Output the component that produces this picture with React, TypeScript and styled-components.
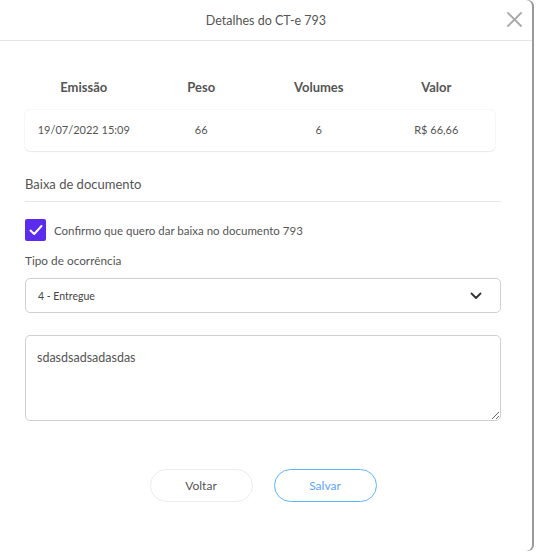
import React, { useState } from "react";
import styled, { createGlobalStyle } from "styled-components";

const GlobalStyle = createGlobalStyle`
  body {
    margin: 0;
    background: #ffffff;
    font-family: Lato, "Noto Sans", sans-serif;
    color: #555;
  }
`;

const Page = styled.div`
  width: 537px;
  height: 553px;
  overflow: hidden;
`;

const Modal = styled.div`
  width: 532px;
  height: 551px;
  background: #fff;
  border-radius: 0 6px 6px 0;
  box-shadow: 2px 0 0 #9a9a9a;
  display: flex;
  flex-direction: column;
`;

const Header = styled.header`
  height: 40px;
  border-bottom: 1px solid #e6e6e6;
  display: flex;
  align-items: center;
  justify-content: center;
  position: relative;

  h2 {
    margin: 0;
    font-size: 12.5px;
    font-weight: 400;
    color: #555;
  }
`;

const Close = styled.button`
  position: absolute;
  right: 9px;
  top: 11px;
  border: none;
  background: none;
  padding: 0;
  cursor: pointer;
  display: flex;
`;

const Body = styled.div`
  padding: 0 31px 0 25px;
  display: flex;
  flex-direction: column;
`;

const Grid = styled.div`
  width: 470px;
  display: grid;
  grid-template-columns: repeat(4, 1fr);
  text-align: center;
`;

const HeadRow = styled(Grid)`
  margin-top: 36px;
  height: 20px;
  align-items: center;
  font-size: 13px;
  font-weight: 700;
  color: #555;
`;

const DataRow = styled(Grid)`
  margin-top: 13px;
  height: 41px;
  align-items: center;
  font-size: 11px;
  color: #555;
  border-radius: 5px;
  box-shadow: 0 0 2px rgba(0, 0, 0, 0.12), 0 1px 1px rgba(0, 0, 0, 0.06);

  span {
    margin-bottom: 3px;
  }
`;

const SectionTitle = styled.div`
  margin-top: 24px;
  padding-bottom: 8px;
  border-bottom: 1px solid #e6e6e6;
  font-size: 13px;
  line-height: 18px;
  color: #555;
`;

const CheckRow = styled.label`
  margin-top: 17px;
  display: flex;
  align-items: center;
  gap: 8px;
  font-size: 11.5px;
  color: #555;
  cursor: pointer;
`;

const Box = styled.span<{ $on: boolean }>`
  width: 21px;
  height: 22px;
  border-radius: 2px;
  background: ${(p) => (p.$on ? "#5b2bee" : "#fff")};
  border: ${(p) => (p.$on ? "none" : "1px solid #aaa")};
  display: flex;
  align-items: center;
  justify-content: center;
`;

const Label = styled.div`
  margin-top: 12px;
  font-size: 11.8px;
  line-height: 16px;
  color: #555;
`;

const Select = styled.div`
  margin-top: 9px;
  height: 35px;
  box-sizing: border-box;
  border: 1px solid #cfcfcf;
  border-radius: 5px;
  padding: 0 18px 0 12px;
  display: flex;
  align-items: center;
  justify-content: space-between;
  font-size: 10.5px;
  color: #444;
`;

const TextArea = styled.textarea`
  margin-top: 22px;
  height: 86px;
  box-sizing: border-box;
  border: 1px solid #cfcfcf;
  border-radius: 5px;
  padding: 14px 11px;
  font-family: inherit;
  font-size: 12.5px;
  color: #555;
  resize: vertical;
  outline: none;
`;

const Actions = styled.div`
  margin-top: 48px;
  display: flex;
  justify-content: center;
  gap: 21px;
`;

const Button = styled.button<{ $primary?: boolean }>`
  width: 103px;
  height: 33px;
  border-radius: 17px;
  background: #fff;
  border: 1.5px solid ${(p) => (p.$primary ? "#5cb5ff" : "#ececec")};
  color: ${(p) => (p.$primary ? "#5aa6ff" : "#555")};
  font-family: inherit;
  font-size: 12px;
  cursor: pointer;
`;

const App = () => {
  const [checked, setChecked] = useState(true);
  const [obs, setObs] = useState("sdasdsadsadasdas");

  return (
    <Page>
      <GlobalStyle />
      <Modal>
        <Header>
          <h2>Detalhes do CT-e 793</h2>
          <Close aria-label="Fechar">
            <svg width="17" height="17" viewBox="0 0 17 17">
              <path d="M2 2 L15 15 M15 2 L2 15" stroke="#a9a9a9" strokeWidth="1.8" strokeLinecap="round" />
            </svg>
          </Close>
        </Header>
        <Body>
          <HeadRow>
            <span>Emissão</span>
            <span>Peso</span>
            <span>Volumes</span>
            <span>Valor</span>
          </HeadRow>
          <DataRow>
            <span>19/07/2022 15:09</span>
            <span>66</span>
            <span>6</span>
            <span>R$ 66,66</span>
          </DataRow>

          <SectionTitle>Baixa de documento</SectionTitle>

          <CheckRow onClick={() => setChecked(!checked)}>
            <Box $on={checked}>
              {checked && (
                <svg width="14" height="12" viewBox="0 0 14 12">
                  <path d="M1.5 6.5 L5.2 10 L12.5 2" fill="none" stroke="#fff" strokeWidth="2" strokeLinecap="round" strokeLinejoin="round" />
                </svg>
              )}
            </Box>
            Confirmo que quero dar baixa no documento 793
          </CheckRow>

          <Label>Tipo de ocorrência</Label>
          <Select>
            <span>4 - Entregue</span>
            <svg width="12" height="8" viewBox="0 0 12 8">
              <path d="M1.5 1.5 L6 6 L10.5 1.5" fill="none" stroke="#333" strokeWidth="1.8" strokeLinecap="round" strokeLinejoin="round" />
            </svg>
          </Select>

          <TextArea value={obs} onChange={(e) => setObs(e.target.value)} />

          <Actions>
            <Button>Voltar</Button>
            <Button $primary>Salvar</Button>
          </Actions>
        </Body>
      </Modal>
    </Page>
  );
};

export default App;
